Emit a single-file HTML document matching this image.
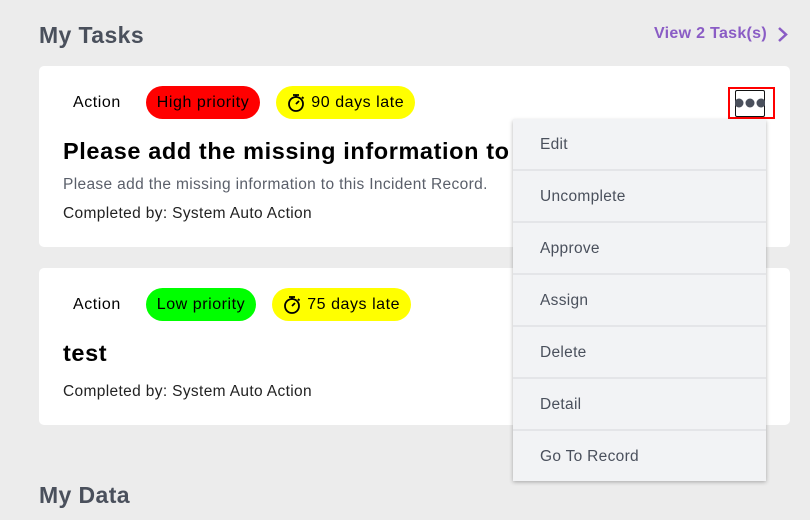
<!DOCTYPE html>
<html><head><style>
*{margin:0;padding:0;box-sizing:border-box}
body{width:810px;height:520px;background:#ececec;font-family:"Liberation Sans",sans-serif;position:relative;overflow:hidden}
.h{position:absolute;left:39px;font-size:23px;letter-spacing:.4px;font-weight:bold;color:#4a505c}
.card{position:absolute;left:39px;width:751px;background:#fff;border-radius:5px}
.tags{position:absolute;left:0;top:20px;height:33px;display:flex;align-items:center;font-size:16px;letter-spacing:.55px;color:#000}
.pill{height:33px;border-radius:17px;display:flex;align-items:center;padding:1px 11px 0;margin-right:16px}
.t{position:absolute;left:24px;font-size:23.5px;letter-spacing:.6px;font-weight:bold;color:#000;white-space:nowrap}
.s{position:absolute;left:24px;font-size:15.5px;letter-spacing:.35px;color:#222;white-space:nowrap}
.menu{position:absolute;left:513px;top:119px;width:253px;height:361px;background:#e4e5e8;box-shadow:0 2px 4px rgba(0,0,0,.3)}
.mi{height:50px;margin-bottom:2px;background:#f2f3f5;padding-left:27px;line-height:51px;font-size:15.5px;letter-spacing:.3px;color:#4a505c}
</style></head><body>
<div class="h" style="top:22px">My Tasks</div>
<div style="position:absolute;left:654px;top:25px;font-size:16px;letter-spacing:.3px;font-weight:bold;color:#8a5cc5">View 2 Task(s)</div>
<svg style="position:absolute;left:777px;top:26px" width="12" height="17"><path d="M2 2l7 6.5L2 15" stroke="#8a5cc5" stroke-width="2.5" fill="none"/></svg>

<div class="card" style="top:66px;height:181px">
 <div class="tags"><span style="margin:1px 25px 0 34px">Action</span>
  <div class="pill" style="background:#f00">High priority</div>
  <div class="pill" style="background:#ff0"><svg width="18" height="20" style="margin-right:6px"><circle cx="9" cy="11" r="7" stroke="#000" stroke-width="1.8" fill="none"/><path d="M6 2h6M9 2v2M9 11l3-3M15 4l1.5 1.5" stroke="#000" stroke-width="1.8" fill="none"/></svg>90 days late</div>
 </div>
 <div class="t" style="top:72px">Please add the missing information to t</div>
 <div class="s" style="top:110px;color:#5a5f6a">Please add the missing information to this Incident Record.</div>
 <div class="s" style="top:139px">Completed by: System Auto Action</div>
</div>
<div style="position:absolute;left:728px;top:87px;width:47px;height:32px;border:2px solid #f00"></div>
<div style="position:absolute;left:735px;top:90px;width:30px;height:27px;border:1.5px solid #111;border-radius:2px;background:#fff"></div>
<svg style="position:absolute;left:735px;top:96px" width="30" height="14"><circle cx="4" cy="7" r="4.5" fill="#4a505c"/><circle cx="15" cy="7" r="4.5" fill="#4a505c"/><circle cx="26" cy="7" r="4.5" fill="#4a505c"/></svg>

<div class="card" style="top:268px;height:157px">
 <div class="tags"><span style="margin:1px 25px 0 34px">Action</span>
  <div class="pill" style="background:#0f0">Low priority</div>
  <div class="pill" style="background:#ff0"><svg width="18" height="20" style="margin-right:6px"><circle cx="9" cy="11" r="7" stroke="#000" stroke-width="1.8" fill="none"/><path d="M6 2h6M9 2v2M9 11l3-3M15 4l1.5 1.5" stroke="#000" stroke-width="1.8" fill="none"/></svg>75 days late</div>
 </div>
 <div class="t" style="top:72px">test</div>
 <div class="s" style="top:115px">Completed by: System Auto Action</div>
</div>

<div class="h" style="top:482px">My Data</div>

<div class="menu">
<div class="mi">Edit</div><div class="mi">Uncomplete</div><div class="mi">Approve</div><div class="mi">Assign</div><div class="mi">Delete</div><div class="mi">Detail</div><div class="mi" style="margin:0">Go To Record</div>
</div>
</body></html>
